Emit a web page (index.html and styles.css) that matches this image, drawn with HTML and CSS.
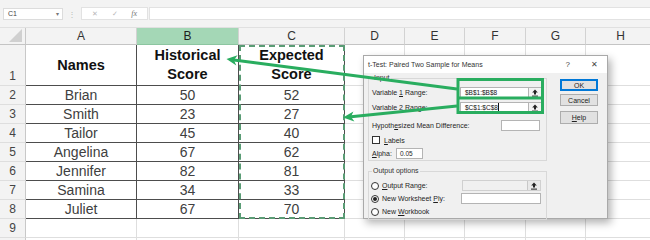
FILE: index.html
```html
<!DOCTYPE html>
<html lang="en">
  <head>
    <meta charset="UTF-8" />
    <meta name="viewport" content="width=device-width, initial-scale=1.0" />
    <title>t-Test: Paired Two Sample for Means</title>
    <link rel="stylesheet" href="styles.css">
  </head>
  <body>
    <!-- formula bar -->
    <div class="formula-bar">
      <div class="name-box">C1<span class="caret">&#9662;</span></div>
      <span class="dots">&#8942;</span>
      <div class="fx-tools"><span>&#10005;</span><span>&#10003;</span><span class="fx">fx</span></div>
      <div class="formula"></div>
    </div>

    <!-- sheet -->
    <div class="row head">
      <div class="rh corner"><span class="tri"></span></div>
      <div class="ch a">A</div>
      <div class="ch b sel">B</div>
      <div class="ch c">C</div>
      <div class="ch d">D</div>
      <div class="ch e">E</div>
      <div class="ch f">F</div>
      <div class="ch g">G</div>
      <div class="ch h">H</div>
    </div>
    <div class="row r1">
      <div class="rh">1</div>
      <div class="cell a t bold">Names</div>
      <div class="cell b t bold">Historical<br>Score</div>
      <div class="cell c t bold">Expected<br>Score</div>
      <div class="cell d"></div><div class="cell e"></div><div class="cell f"></div><div class="cell g"></div><div class="cell h"></div>
    </div>
    <div class="row">
      <div class="rh">2</div>
      <div class="cell a t">Brian</div><div class="cell b t">50</div><div class="cell c t">52</div>
      <div class="cell d"></div><div class="cell e"></div><div class="cell f"></div><div class="cell g"></div><div class="cell h"></div>
    </div>
    <div class="row">
      <div class="rh">3</div>
      <div class="cell a t">Smith</div><div class="cell b t">23</div><div class="cell c t">27</div>
      <div class="cell d"></div><div class="cell e"></div><div class="cell f"></div><div class="cell g"></div><div class="cell h"></div>
    </div>
    <div class="row">
      <div class="rh">4</div>
      <div class="cell a t">Tailor</div><div class="cell b t">45</div><div class="cell c t">40</div>
      <div class="cell d"></div><div class="cell e"></div><div class="cell f"></div><div class="cell g"></div><div class="cell h"></div>
    </div>
    <div class="row">
      <div class="rh">5</div>
      <div class="cell a t">Angelina</div><div class="cell b t">67</div><div class="cell c t">62</div>
      <div class="cell d"></div><div class="cell e"></div><div class="cell f"></div><div class="cell g"></div><div class="cell h"></div>
    </div>
    <div class="row">
      <div class="rh">6</div>
      <div class="cell a t">Jennifer</div><div class="cell b t">82</div><div class="cell c t">81</div>
      <div class="cell d"></div><div class="cell e"></div><div class="cell f"></div><div class="cell g"></div><div class="cell h"></div>
    </div>
    <div class="row">
      <div class="rh">7</div>
      <div class="cell a t">Samina</div><div class="cell b t">34</div><div class="cell c t">33</div>
      <div class="cell d"></div><div class="cell e"></div><div class="cell f"></div><div class="cell g"></div><div class="cell h"></div>
    </div>
    <div class="row">
      <div class="rh">8</div>
      <div class="cell a t">Juliet</div><div class="cell b t">67</div><div class="cell c t">70</div>
      <div class="cell d"></div><div class="cell e"></div><div class="cell f"></div><div class="cell g"></div><div class="cell h"></div>
    </div>
    <div class="row">
      <div class="rh">9</div>
      <div class="cell a"></div><div class="cell b"></div><div class="cell c"></div>
      <div class="cell d"></div><div class="cell e"></div><div class="cell f"></div><div class="cell g"></div><div class="cell h"></div>
    </div>
    <div class="row">
      <div class="rh"></div>
      <div class="cell a"></div><div class="cell b"></div><div class="cell c"></div>
      <div class="cell d"></div><div class="cell e"></div><div class="cell f"></div><div class="cell g"></div><div class="cell h"></div>
    </div>

    <!-- copy marquee round C1:C8 -->
    <div class="marquee"></div>

    <!-- dialog -->
    <div class="dialog">
      <div class="title">
        <span class="title-text">t-Test: Paired Two Sample for Means</span>
        <span class="q">?</span>
        <span class="x">&#10005;</span>
      </div>
      <div class="body">
        <div class="left">
          <fieldset class="group input-group">
            <legend>Input</legend>
            <div class="frow">
              <span class="lbl">Variable <u>1</u> Range:</span>
              <div class="range"><span class="val">$B$1:$B$8</span><span class="pick"><svg width="8" height="8" viewBox="0 0 8 8"><path d="M4 0.5 L1.2 3.5 H3 V5.5 H5 V3.5 H6.8 Z" fill="#222"/><rect x="1" y="6.6" width="6" height="1" fill="#222"/></svg></span></div>
            </div>
            <div class="frow var2">
              <span class="lbl">Variable <u>2</u> Range:</span>
              <div class="range"><span class="val">$C$1:$C$8<i class="cursor"></i></span><span class="pick"><svg width="8" height="8" viewBox="0 0 8 8"><path d="M4 0.5 L1.2 3.5 H3 V5.5 H5 V3.5 H6.8 Z" fill="#222"/><rect x="1" y="6.6" width="6" height="1" fill="#222"/></svg></span></div>
            </div>
            <div class="frow hyp">
              <span>Hypoth<u>e</u>sized Mean Difference:</span>
              <div class="box hyp-box"></div>
            </div>
            <div class="frow labels">
              <span class="check"></span><span><u>L</u>abels</span>
            </div>
            <div class="frow alpha">
              <span class="alpha-lbl"><u>A</u>lpha:</span>
              <div class="box alpha-box">0.05</div>
            </div>
          </fieldset>
          <fieldset class="group output-group">
            <legend>Output options</legend>
            <div class="frow">
              <span class="radio"></span><span><u>O</u>utput Range:</span>
              <div class="range off"><span class="val"></span><span class="pick"><svg width="8" height="8" viewBox="0 0 8 8"><path d="M4 0.5 L1.2 3.5 H3 V5.5 H5 V3.5 H6.8 Z" fill="#222"/><rect x="1" y="6.6" width="6" height="1" fill="#222"/></svg></span></div>
            </div>
            <div class="frow out2">
              <span class="radio on"></span><span>New Worksheet <u>P</u>ly:</span>
              <div class="box ply-box"></div>
            </div>
            <div class="frow out3">
              <span class="radio"></span><span>New <u>W</u>orkbook</span>
            </div>
          </fieldset>
        </div>
        <div class="buttons">
          <div class="btn ok">OK</div>
          <div class="btn cancel">Cancel</div>
          <div class="btn help"><u>H</u>elp</div>
        </div>
      </div>
    </div>

    <!-- green callouts -->
    <svg class="callouts" width="650" height="240" viewBox="0 0 650 240">
      <g stroke="#29ad5f" stroke-width="3" fill="none">
        <rect x="458" y="79.5" width="84.5" height="33" />
        <line x1="458" y1="98" x2="543" y2="98" />
        <line x1="457" y1="89" x2="233.9" y2="60" />
        <line x1="457" y1="106" x2="351" y2="116.7" />
      </g>
      <g fill="#29ad5f">
        <polygon points="226.5,59 237.6,55.3 233.9,60 236.3,65.4" />
        <polygon points="343,117.5 353.4,111.4 351,116.7 354.4,121.4" />
      </g>
    </svg>
  </body>
</html>
```

FILE: styles.css
```css
body{
  margin: 0;
  width: 650px;
  height: 240px;
  overflow: hidden;
  position: relative;
  background-color: #fff;
  font-family: "Liberation Sans", Arial, sans-serif;
}
/* 수식 입력줄 */
.formula-bar{
  height: 28px;
  box-sizing: border-box;
  background-color: #f3f3f3;
  display: flex;
  align-items: flex-end;
  padding-bottom: 7px;
  border-bottom: 1px solid #e0e0e0;
}
.name-box{
  margin-left: 3px;
  width: 60px;
  height: 12px;
  box-sizing: border-box;
  background-color: #fff;
  border: 1px solid #dcdcdc;
  font-size: 7px;
  line-height: 10px;
  color: #444;
  padding-left: 4px;
  display: flex;
  justify-content: space-between;
}
.caret{
  color: #777;
  font-size: 6px;
  padding-right: 3px;
}
.dots{
  width: 18px;
  text-align: center;
  font-size: 8px;
  line-height: 11px;
  color: #b8b8b8;
}
.fx-tools{
  width: 67px;
  height: 13px;
  box-sizing: border-box;
  background-color: #fff;
  border: 1px solid #e2e2e2;
  display: flex;
  justify-content: space-around;
  align-items: center;
  font-size: 7px;
  color: #b8b8b8;
  padding: 0 3px;
}
.fx-tools .fx{
  font-family: "Liberation Serif", serif;
  font-style: italic;
  color: #777;
  font-size: 8px;
}
.formula{
  flex: 1;
  height: 13px;
  margin-left: 1px;
  box-sizing: border-box;
  background-color: #fff;
  border: 1px solid #e2e2e2;
  border-right: none;
}
/* 시트 */
.row{
  display: flex;
  height: 19px;
}
.row.head{
  height: 17px;
}
.row.r1{
  height: 41px;
}
.row > div{
  flex: none;
  box-sizing: border-box;
  border-right: 1px solid #dedede;
  border-bottom: 1px solid #dedede;
  display: flex;
  align-items: center;
  justify-content: center;
}
.rh{
  width: 26px;
  background-color: #f3f3f3;
  font-size: 12px;
  color: #444;
  border-right-color: #c8c8c8 !important;
}
.r1 .rh{
  align-items: flex-end !important;
  padding-bottom: 2px;
}
.a{ width: 111px; }
.b{ width: 102px; }
.c{ width: 106px; }
.d{ width: 60px; }
.e{ width: 60px; }
.f{ width: 61px; }
.g{ width: 60px; }
.h{ width: 70px; }
.ch{
  background-color: #f3f3f3;
  font-size: 12px;
  color: #333;
  border-right-color: #d2d2d2 !important;
  border-bottom-color: #c4c4c4 !important;
}
.ch.sel{
  background-color: #a4d7b6;
  color: #1f1f1f;
  border-bottom-color: #8cc5a0 !important;
}
.corner{
  border-bottom-color: #c4c4c4 !important;
  justify-content: flex-end !important;
  align-items: flex-end !important;
  padding: 0 3px 2px 0;
}
.tri{
  width: 0;
  height: 0;
  border-left: 13px solid transparent;
  border-bottom: 13px solid #d0d0d0;
}
.cell{
  font-size: 14px;
  color: #404040;
}
.cell.t{
  border-right-color: #4d4d4d !important;
  border-bottom-color: #4d4d4d !important;
}
.cell.bold{
  font-weight: 700;
  font-size: 14.5px;
  line-height: 19px;
  color: #111;
  text-align: center;
}
.marquee{
  position: absolute;
  left: 239px;
  top: 45px;
  width: 106px;
  height: 174px;
  box-sizing: border-box;
  border: 2px dashed #5a9c75;
}
/* 대화 상자 */
.dialog{
  position: absolute;
  left: 363px;
  top: 55px;
  width: 245px;
  height: 164px;
  box-sizing: border-box;
  border: 1px solid #a9a9a9;
  background-color: #f0f0f0;
  box-shadow: 3px 4px 8px rgba(0, 0, 0, 0.3);
  font-size: 7px;
  color: #1e1e1e;
  display: flex;
  flex-direction: column;
}
.title{
  height: 17px;
  flex: none;
  background-color: #fff;
  display: flex;
  align-items: center;
  padding-left: 4px;
  color: #333;
}
.title-text{
  flex: 1;
}
.title .q{
  font-size: 8px;
  color: #444;
  margin-right: 21px;
}
.title .x{
  font-size: 8px;
  color: #444;
  margin-right: 9px;
}
.body{
  display: flex;
  padding: 1px 0 0 4px;
}
.left{
  width: 179px;
}
.group{
  margin: 0;
  border: 1px solid #d8d8d8;
  padding: 5px 4px 1px 3px;
}
.group legend{
  padding: 0 1px;
  margin-left: 1px;
  line-height: 8px;
  color: #333;
}
.frow{
  display: flex;
  align-items: center;
  height: 11px;
  white-space: nowrap;
}
.frow.var2{ margin-top: 4px; }
.frow.hyp{ margin-top: 7px; }
.frow.labels{ margin-top: 4px; height: 10px; }
.frow.alpha{ margin-top: 3px; }
.lbl{
  width: 88px;
}
.range{
  width: 82px;
  height: 11px;
  box-sizing: border-box;
  background-color: #fff;
  border: 1px solid #b4b4b4;
  display: flex;
}
.range .val{
  flex: 1;
  padding-left: 4px;
  line-height: 9px;
  font-size: 6.5px;
  color: #111;
}
.cursor{
  display: inline-block;
  width: 1px;
  height: 8px;
  background-color: #111;
  vertical-align: -1px;
}
.range .pick{
  width: 12px;
  border-left: 1px solid #b4b4b4;
  background-color: #f3f3f3;
  display: flex;
  align-items: center;
  justify-content: center;
}
.range.off{
  margin-left: auto;
  width: 79px;
  margin-right: 1px;
  background-color: #f0f0f0;
  border-color: #d0d0d0;
}
.range.off .pick{
  background-color: #e8e8e8;
  border-left-color: #c8c8c8;
}
.box{
  height: 11px;
  box-sizing: border-box;
  background-color: #fff;
  border: 1px solid #b4b4b4;
}
.hyp-box{
  width: 39px;
  margin-left: auto;
  margin-right: 2px;
}
.check{
  width: 8px;
  height: 8px;
  box-sizing: border-box;
  background-color: #fff;
  border: 1px solid #333;
  margin-right: 4px;
}
.alpha-lbl{
  width: 24px;
}
.alpha-box{
  width: 27px;
  padding-left: 3px;
  line-height: 9px;
  font-size: 6.5px;
}
.output-group{
  margin-top: 6px;
  padding: 5px 4px 2px 2px;
}
.frow.out2,
.frow.out3{
  margin-top: 2px;
}
.radio{
  width: 8px;
  height: 8px;
  box-sizing: border-box;
  border: 1px solid #333;
  border-radius: 50%;
  background-color: #fff;
  margin-right: 3px;
  display: flex;
  align-items: center;
  justify-content: center;
}
.radio.on::after{
  content: "";
  width: 4px;
  height: 4px;
  border-radius: 50%;
  background-color: #222;
}
.ply-box{
  width: 80px;
  margin-left: auto;
  margin-right: 1px;
}
/* 버튼 */
.buttons{
  margin-left: 13px;
  width: 38px;
  display: flex;
  flex-direction: column;
}
.btn{
  height: 12px;
  box-sizing: border-box;
  background-color: #e1e1e1;
  border: 1px solid #adadad;
  display: flex;
  align-items: center;
  justify-content: center;
  color: #222;
}
.btn.ok{
  margin-top: 5px;
  border-color: #0078d7;
  box-shadow: inset 0 0 0 1px #0078d7;
}
.btn.cancel{
  margin-top: 3px;
}
.btn.help{
  margin-top: 5px;
  height: 13px;
}
.callouts{
  position: absolute;
  left: 0;
  top: 0;
  pointer-events: none;
}
```
